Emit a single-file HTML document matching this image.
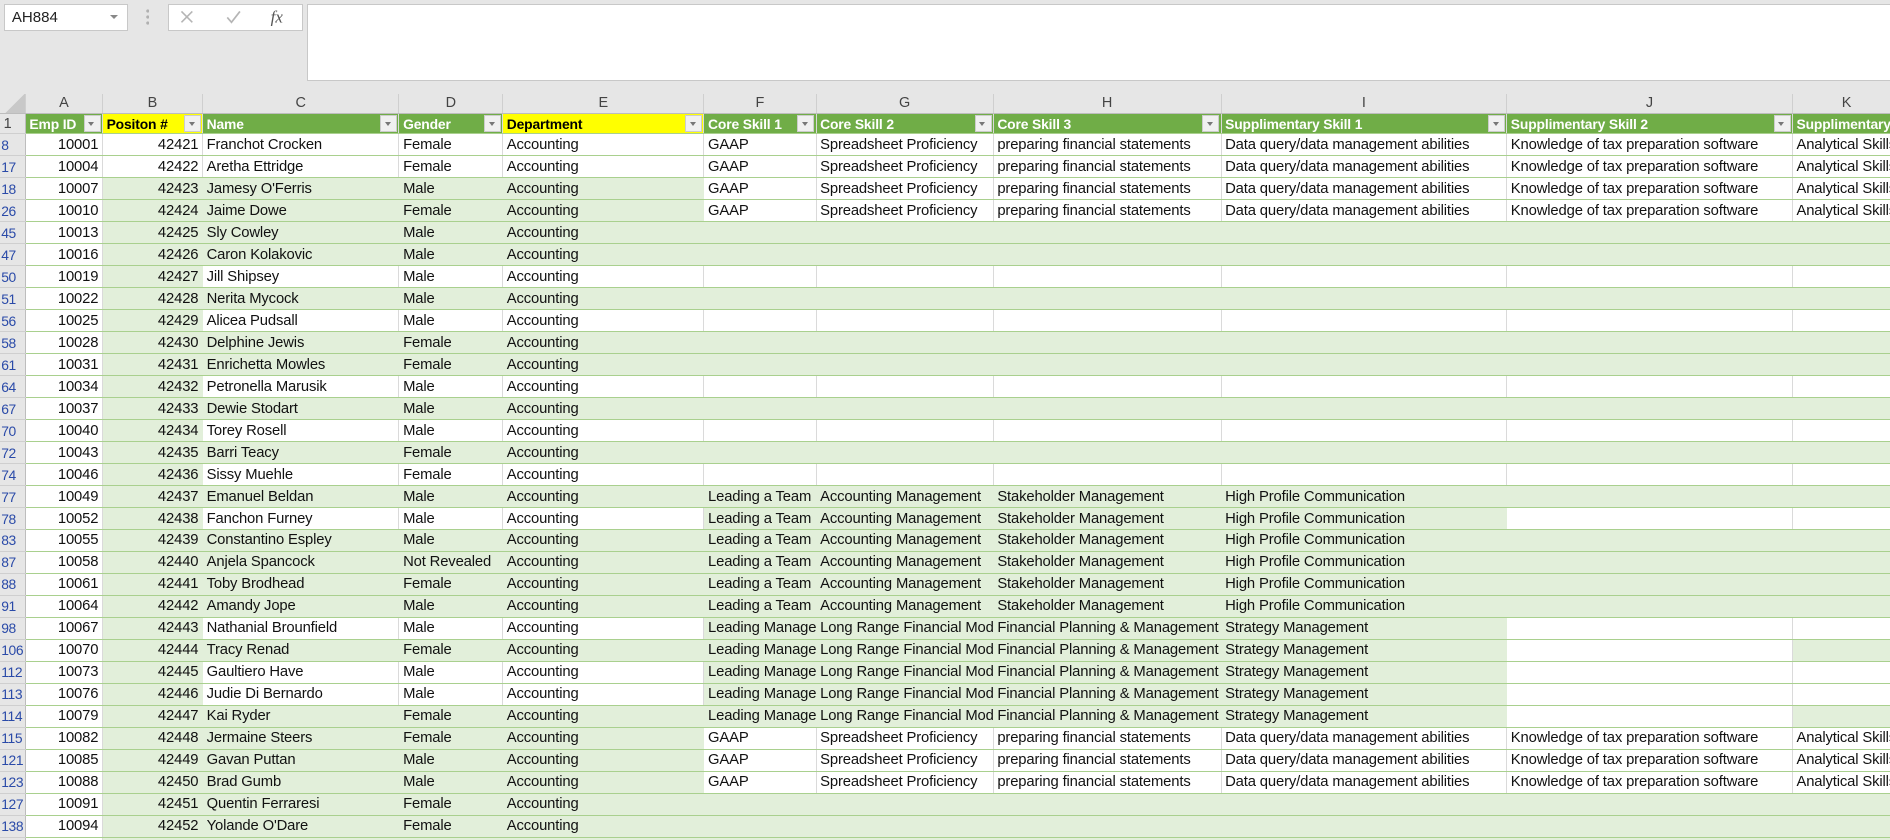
<!DOCTYPE html>
<html><head><meta charset="utf-8">
<style>
html,body{margin:0;padding:0;background:#e6e6e6;overflow:hidden;width:1890px;height:840px}
#w{zoom:1.2054;width:1568px;height:697px;position:relative;overflow:hidden;font-family:"Liberation Sans",sans-serif}
.nb{position:absolute;left:3px;top:3px;width:103px;height:23px;background:#fff;border:1px solid #c8c8c8;box-sizing:border-box;font-size:12.5px;line-height:21px;padding-left:6px;color:#222}
.nb i{position:absolute;right:7px;top:9px;border-left:3.5px solid transparent;border-right:3.5px solid transparent;border-top:4px solid #888}
.dots{position:absolute;left:121px;top:7px;width:3px;height:14px;background:radial-gradient(circle,#b0b0b0 1.2px,transparent 1.5px) 0 0/3px 5px}
.bt{position:absolute;left:139px;top:3px;width:112px;height:23px;background:#fff;border:1px solid #c8c8c8;box-sizing:border-box}
.fb{position:absolute;left:255px;top:3px;width:1320px;height:64px;background:#fff;border:1px solid #c8c8c8;box-sizing:border-box}
table{position:absolute;left:0;top:78px;width:1577px;border-collapse:collapse;table-layout:fixed;font-size:12.3px;letter-spacing:-0.12px;color:#111}
td,th{padding:0 3px;white-space:nowrap;overflow:hidden;box-sizing:border-box}
tr.ch th{height:16px;background:#e6e6e6;color:#444;font-weight:normal;font-size:12px;letter-spacing:0;border-right:1px solid #cfcfcf;border-bottom:1px solid #bdbdbd;text-align:center}
tr.hd td{height:17px;background:#70ad47;color:#fff;font-weight:bold;position:relative;border-bottom:1px solid #a9d08e;font-size:11.5px}
tr.hd td.y{background:#ffff00;color:#000}
tr.hd td b{position:absolute;right:1px;top:1px;width:14px;height:14px;background:#f0f0f0;border:1px solid #ccc;box-sizing:border-box}
tr.hd td b:after{content:"";position:absolute;left:3px;top:5px;border-left:3px solid transparent;border-right:3px solid transparent;border-top:4px solid #777}
tbody th{background:#e6e6e6;color:#2a4aa8;font-weight:normal;font-size:11.5px;letter-spacing:-0.3px;text-align:left;padding:0 0 0 1px;border-right:1px solid #bdbdbd;border-bottom:1px solid #cfcfcf}
tbody td{height:18.25px;background:#fff;border-bottom:1px solid #a9d08e;border-right:1px solid #dadada}
tbody td.g{background:#e2efda;border-right-color:#e2efda}
td.r{text-align:right}
tr.hd th{background:#e6e6e6;color:#444;font-weight:normal;font-size:12px;text-align:left;padding-left:3px;border-right:1px solid #bdbdbd}
</style></head><body><div id="w">
<div class="nb">AH884<i></i></div>
<div class="dots"></div>
<div class="bt">
<svg width="112" height="23" style="position:absolute;left:-1px;top:-1px">
<path d="M12 7l9 9M21 7l-9 9" stroke="#b5b5b5" stroke-width="1.3" fill="none"/>
<path d="M50 12l3.5 4 7-9" stroke="#b5b5b5" stroke-width="1.4" fill="none"/>
<text x="86" y="16" font-family="Liberation Serif" font-style="italic" font-size="14" fill="#555">fx</text>
</svg></div>
<div class="fb"></div>
<table>
<colgroup><col style="width:21px"><col style="width:64px"><col style="width:83px"><col style="width:163px"><col style="width:86px"><col style="width:167px"><col style="width:93px"><col style="width:147px"><col style="width:189px"><col style="width:237px"><col style="width:237px"><col style="width:90px"></colgroup>
<thead><tr class="ch"><th style="background:linear-gradient(135deg,#e6e6e6 55%,#c8c8c8 56%)"></th><th>A</th><th>B</th><th>C</th><th>D</th><th>E</th><th>F</th><th>G</th><th>H</th><th>I</th><th>J</th><th>K</th></tr></thead>
<tbody>
<tr class="hd"><th>1</th><td>Emp ID<b></b></td><td class="y">Positon #<b></b></td><td>Name<b></b></td><td>Gender<b></b></td><td class="y">Department<b></b></td><td>Core Skill 1<b></b></td><td>Core Skill 2<b></b></td><td>Core Skill 3<b></b></td><td>Supplimentary Skill 1<b></b></td><td>Supplimentary Skill 2<b></b></td><td>Supplimentary Skill 3</td></tr>
<tr><th>8</th><td class="r">10001</td><td class="r">42421</td><td>Franchot Crocken</td><td>Female</td><td>Accounting</td><td>GAAP</td><td>Spreadsheet Proficiency</td><td>preparing financial statements</td><td>Data query/data management abilities</td><td>Knowledge of tax preparation software</td><td>Analytical Skills</td></tr>
<tr><th>17</th><td class="r">10004</td><td class="r">42422</td><td>Aretha Ettridge</td><td>Female</td><td>Accounting</td><td>GAAP</td><td>Spreadsheet Proficiency</td><td>preparing financial statements</td><td>Data query/data management abilities</td><td>Knowledge of tax preparation software</td><td>Analytical Skills</td></tr>
<tr><th>18</th><td class="r">10007</td><td class="r g">42423</td><td class="g">Jamesy O'Ferris</td><td class="g">Male</td><td class="g">Accounting</td><td>GAAP</td><td>Spreadsheet Proficiency</td><td>preparing financial statements</td><td>Data query/data management abilities</td><td>Knowledge of tax preparation software</td><td>Analytical Skills</td></tr>
<tr><th>26</th><td class="r">10010</td><td class="r g">42424</td><td class="g">Jaime Dowe</td><td class="g">Female</td><td class="g">Accounting</td><td>GAAP</td><td>Spreadsheet Proficiency</td><td>preparing financial statements</td><td>Data query/data management abilities</td><td>Knowledge of tax preparation software</td><td>Analytical Skills</td></tr>
<tr><th>45</th><td class="r">10013</td><td class="r g">42425</td><td class="g">Sly Cowley</td><td class="g">Male</td><td class="g">Accounting</td><td class="g"></td><td class="g"></td><td class="g"></td><td class="g"></td><td class="g"></td><td class="g"></td></tr>
<tr><th>47</th><td class="r">10016</td><td class="r g">42426</td><td class="g">Caron Kolakovic</td><td class="g">Male</td><td class="g">Accounting</td><td class="g"></td><td class="g"></td><td class="g"></td><td class="g"></td><td class="g"></td><td class="g"></td></tr>
<tr><th>50</th><td class="r">10019</td><td class="r g">42427</td><td>Jill Shipsey</td><td>Male</td><td>Accounting</td><td></td><td></td><td></td><td></td><td></td><td></td></tr>
<tr><th>51</th><td class="r">10022</td><td class="r g">42428</td><td class="g">Nerita Mycock</td><td class="g">Male</td><td class="g">Accounting</td><td class="g"></td><td class="g"></td><td class="g"></td><td class="g"></td><td class="g"></td><td class="g"></td></tr>
<tr><th>56</th><td class="r">10025</td><td class="r g">42429</td><td>Alicea Pudsall</td><td>Male</td><td>Accounting</td><td></td><td></td><td></td><td></td><td></td><td></td></tr>
<tr><th>58</th><td class="r">10028</td><td class="r g">42430</td><td class="g">Delphine Jewis</td><td class="g">Female</td><td class="g">Accounting</td><td class="g"></td><td class="g"></td><td class="g"></td><td class="g"></td><td class="g"></td><td class="g"></td></tr>
<tr><th>61</th><td class="r">10031</td><td class="r g">42431</td><td class="g">Enrichetta Mowles</td><td class="g">Female</td><td class="g">Accounting</td><td class="g"></td><td class="g"></td><td class="g"></td><td class="g"></td><td class="g"></td><td class="g"></td></tr>
<tr><th>64</th><td class="r">10034</td><td class="r g">42432</td><td>Petronella Marusik</td><td>Male</td><td>Accounting</td><td></td><td></td><td></td><td></td><td></td><td></td></tr>
<tr><th>67</th><td class="r">10037</td><td class="r g">42433</td><td class="g">Dewie Stodart</td><td class="g">Male</td><td class="g">Accounting</td><td class="g"></td><td class="g"></td><td class="g"></td><td class="g"></td><td class="g"></td><td class="g"></td></tr>
<tr><th>70</th><td class="r">10040</td><td class="r g">42434</td><td>Torey Rosell</td><td>Male</td><td>Accounting</td><td></td><td></td><td></td><td></td><td></td><td></td></tr>
<tr><th>72</th><td class="r">10043</td><td class="r g">42435</td><td class="g">Barri Teacy</td><td class="g">Female</td><td class="g">Accounting</td><td class="g"></td><td class="g"></td><td class="g"></td><td class="g"></td><td class="g"></td><td class="g"></td></tr>
<tr><th>74</th><td class="r">10046</td><td class="r g">42436</td><td>Sissy Muehle</td><td>Female</td><td>Accounting</td><td></td><td></td><td></td><td></td><td></td><td></td></tr>
<tr><th>77</th><td class="r">10049</td><td class="r g">42437</td><td class="g">Emanuel Beldan</td><td class="g">Male</td><td class="g">Accounting</td><td class="g">Leading a Team</td><td class="g">Accounting Management</td><td class="g">Stakeholder Management</td><td class="g">High Profile Communication</td><td class="g"></td><td class="g"></td></tr>
<tr><th>78</th><td class="r">10052</td><td class="r g">42438</td><td>Fanchon Furney</td><td>Male</td><td>Accounting</td><td class="g">Leading a Team</td><td class="g">Accounting Management</td><td class="g">Stakeholder Management</td><td class="g">High Profile Communication</td><td></td><td></td></tr>
<tr><th>83</th><td class="r">10055</td><td class="r g">42439</td><td class="g">Constantino Espley</td><td class="g">Male</td><td class="g">Accounting</td><td class="g">Leading a Team</td><td class="g">Accounting Management</td><td class="g">Stakeholder Management</td><td class="g">High Profile Communication</td><td class="g"></td><td class="g"></td></tr>
<tr><th>87</th><td class="r">10058</td><td class="r g">42440</td><td class="g">Anjela Spancock</td><td class="g">Not Revealed</td><td class="g">Accounting</td><td class="g">Leading a Team</td><td class="g">Accounting Management</td><td class="g">Stakeholder Management</td><td class="g">High Profile Communication</td><td class="g"></td><td class="g"></td></tr>
<tr><th>88</th><td class="r">10061</td><td class="r g">42441</td><td class="g">Toby Brodhead</td><td class="g">Female</td><td class="g">Accounting</td><td class="g">Leading a Team</td><td class="g">Accounting Management</td><td class="g">Stakeholder Management</td><td class="g">High Profile Communication</td><td class="g"></td><td class="g"></td></tr>
<tr><th>91</th><td class="r">10064</td><td class="r g">42442</td><td class="g">Amandy Jope</td><td class="g">Male</td><td class="g">Accounting</td><td class="g">Leading a Team</td><td class="g">Accounting Management</td><td class="g">Stakeholder Management</td><td class="g">High Profile Communication</td><td class="g"></td><td class="g"></td></tr>
<tr><th>98</th><td class="r">10067</td><td class="r g">42443</td><td>Nathanial Brounfield</td><td>Male</td><td>Accounting</td><td class="g">Leading Management</td><td class="g">Long Range Financial Modelling</td><td class="g">Financial Planning &amp; Management</td><td class="g">Strategy Management</td><td></td><td></td></tr>
<tr><th>106</th><td class="r">10070</td><td class="r g">42444</td><td class="g">Tracy Renad</td><td class="g">Female</td><td class="g">Accounting</td><td class="g">Leading Management</td><td class="g">Long Range Financial Modelling</td><td class="g">Financial Planning &amp; Management</td><td class="g">Strategy Management</td><td></td><td class="g"></td></tr>
<tr><th>112</th><td class="r">10073</td><td class="r g">42445</td><td>Gaultiero Have</td><td>Male</td><td>Accounting</td><td class="g">Leading Management</td><td class="g">Long Range Financial Modelling</td><td class="g">Financial Planning &amp; Management</td><td class="g">Strategy Management</td><td></td><td></td></tr>
<tr><th>113</th><td class="r">10076</td><td class="r g">42446</td><td>Judie Di Bernardo</td><td>Male</td><td>Accounting</td><td class="g">Leading Management</td><td class="g">Long Range Financial Modelling</td><td class="g">Financial Planning &amp; Management</td><td class="g">Strategy Management</td><td></td><td></td></tr>
<tr><th>114</th><td class="r">10079</td><td class="r g">42447</td><td class="g">Kai Ryder</td><td class="g">Female</td><td class="g">Accounting</td><td class="g">Leading Management</td><td class="g">Long Range Financial Modelling</td><td class="g">Financial Planning &amp; Management</td><td class="g">Strategy Management</td><td></td><td class="g"></td></tr>
<tr><th>115</th><td class="r">10082</td><td class="r g">42448</td><td class="g">Jermaine Steers</td><td class="g">Female</td><td class="g">Accounting</td><td>GAAP</td><td>Spreadsheet Proficiency</td><td>preparing financial statements</td><td>Data query/data management abilities</td><td>Knowledge of tax preparation software</td><td>Analytical Skills</td></tr>
<tr><th>121</th><td class="r">10085</td><td class="r g">42449</td><td class="g">Gavan Puttan</td><td class="g">Male</td><td class="g">Accounting</td><td>GAAP</td><td>Spreadsheet Proficiency</td><td>preparing financial statements</td><td>Data query/data management abilities</td><td>Knowledge of tax preparation software</td><td>Analytical Skills</td></tr>
<tr><th>123</th><td class="r">10088</td><td class="r g">42450</td><td class="g">Brad Gumb</td><td class="g">Male</td><td class="g">Accounting</td><td>GAAP</td><td>Spreadsheet Proficiency</td><td>preparing financial statements</td><td>Data query/data management abilities</td><td>Knowledge of tax preparation software</td><td>Analytical Skills</td></tr>
<tr><th>127</th><td class="r">10091</td><td class="r g">42451</td><td class="g">Quentin Ferraresi</td><td class="g">Female</td><td class="g">Accounting</td><td class="g"></td><td class="g"></td><td class="g"></td><td class="g"></td><td class="g"></td><td class="g"></td></tr>
<tr><th>138</th><td class="r">10094</td><td class="r g">42452</td><td class="g">Yolande O'Dare</td><td class="g">Female</td><td class="g">Accounting</td><td class="g"></td><td class="g"></td><td class="g"></td><td class="g"></td><td class="g"></td><td class="g"></td></tr>
<tr><th>140</th><td></td><td class="g"></td><td class="g"></td><td class="g"></td><td class="g"></td><td class="g"></td><td class="g"></td><td class="g"></td><td class="g"></td><td class="g"></td><td class="g"></td></tr>
</tbody></table>
</div></body></html>
